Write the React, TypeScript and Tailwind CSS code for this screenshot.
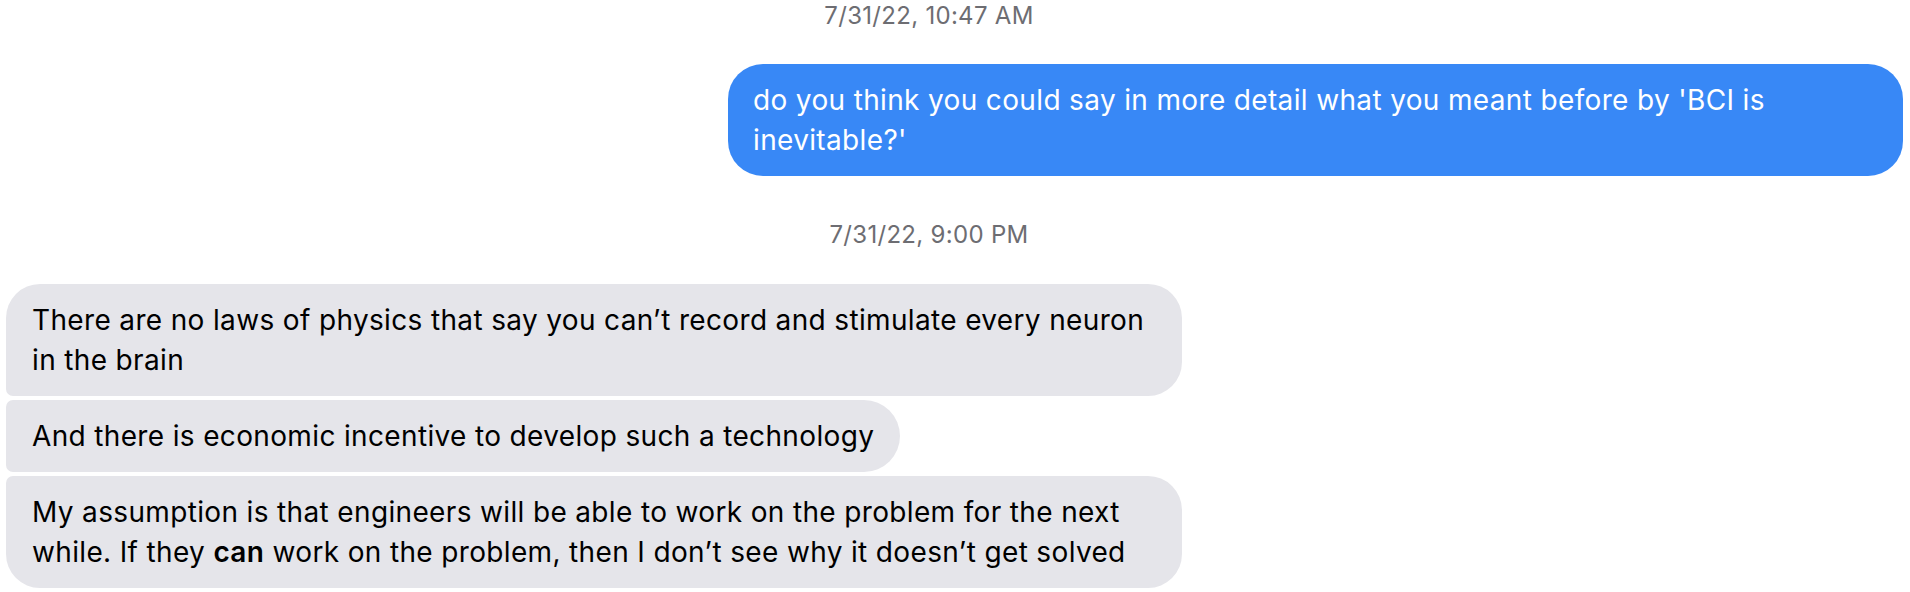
import React from 'react';

type Msg = {
    lines: React.ReactNode[];
    shape: string;
    wide: boolean;
};

const theirs: Msg[] = [
    {
        lines: ['There are no laws of physics that say you can\u2019t record and stimulate every neuron', 'in the brain'],
        shape: 'rounded-tl-[34px] rounded-bl-[7px] rounded-r-[34px]',
        wide: true,
    },
    {
        lines: ['And there is economic incentive to develop such a technology'],
        shape: 'rounded-l-[7px] rounded-r-[36px]',
        wide: false,
    },
    {
        lines: [
            'My assumption is that engineers will be able to work on the problem for the next',
            <>
                while. If they <b className="font-semibold">can</b> work on the problem, then I don{'\u2019'}t see why it doesn{'\u2019'}t get solved
            </>,
        ],
        shape: 'rounded-tl-[7px] rounded-bl-[34px] rounded-r-[34px]',
        wide: true,
    },
];

const Stamp = ({ text, className }: { text: string; className: string }) => (
    <div className={`pr-[52px] text-center text-[24px] leading-[26px] tracking-[0.3px] text-[#6d6d72] ${className}`}>{text}</div>
);

const App = () => {
    return (
        <div className="w-[1910px] h-[592px] overflow-hidden bg-white font-['Inter','Liberation_Sans',sans-serif]">
            <Stamp text="7/31/22, 10:47 AM" className="pt-[3px]" />

            <div className="mt-[35px] flex justify-end pr-[7px]">
                <div className="w-[1175px] rounded-[35px] bg-[#3888f6] px-[25px] py-[16px] text-[28px] leading-[40px] tracking-[0.35px] text-white">
                    do you think you could say in more detail what you meant before by 'BCI is
                    <br />
                    inevitable?'
                </div>
            </div>

            <Stamp text="7/31/22, 9:00 PM" className="mt-[46px]" />

            <div className="mt-[36px] flex flex-col items-start gap-[4px] pl-[6px]">
                {theirs.map((m, i) => (
                    <div
                        key={i}
                        className={`${m.wide ? 'w-[1176px]' : ''} ${m.shape} bg-[#e5e5ea] px-[26px] py-[16px] text-[28px] leading-[40px] tracking-[0.35px] text-black whitespace-nowrap`}
                    >
                        {m.lines.map((l, j) => (
                            <div key={j}>{l}</div>
                        ))}
                    </div>
                ))}
            </div>
        </div>
    );
};

export default App;
